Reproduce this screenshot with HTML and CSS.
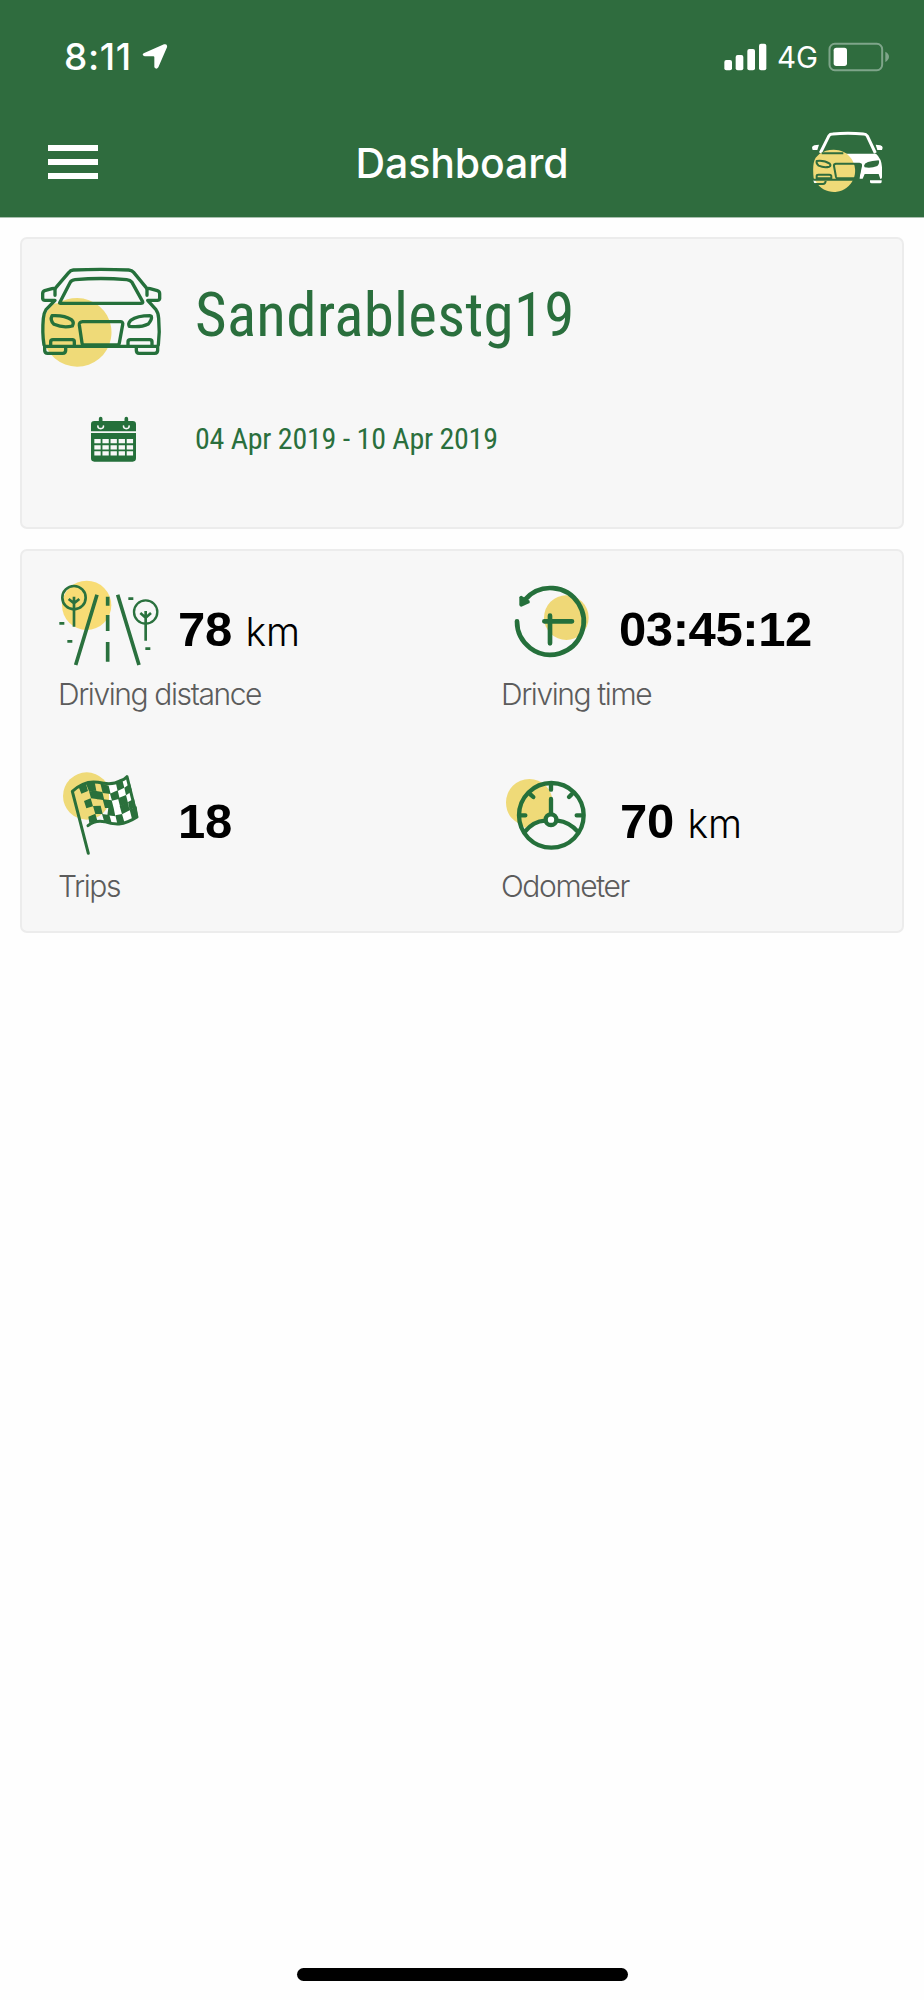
FILE: index.html
```html
<!DOCTYPE html>
<html lang="en">
<head>
<meta charset="utf-8">
<title>Dashboard</title>
<link rel="stylesheet" href="styles.css">
</head>
<body>
<div class="screen">
  <header class="header">
    <div class="status">
      <div class="clock">
        <span class="clock-time">8:11</span>
        <svg class="arrow" width="27" height="27" viewBox="426 129 81 81"><path d="M431 160L492 133Q503 130 501 142L475 202Q469 210 463 202V172Q463 169 460 169H434Q424 166 431 160Z" fill="#fff"/></svg>
      </div>
      <div class="signals">
        <svg width="45" height="29" viewBox="99 66 135 87" fill="#fff"><rect x="103" y="120" width="23" height="31" rx="6"/><rect x="137" y="105" width="23" height="46" rx="6"/><rect x="172" y="87" width="23" height="64" rx="6"/><rect x="207" y="71" width="22" height="80" rx="6"/></svg>
        <span class="network">4G</span>
        <svg width="62" height="30" viewBox="414 66 186 90"><rect x="418.500" y="71.500" width="158" height="79" rx="16" fill="none" stroke="#7fa58a" stroke-width="6"/><rect x="431" y="83" width="40" height="55" rx="8" fill="#fff"/><path d="M586 95Q597 101 597 110T586 126Z" fill="#7fa58a"/></svg>
      </div>
    </div>
    <nav class="nav">
      <div class="menu"><i></i><i></i><i></i></div>
      <h1 class="title">Dashboard</h1>
      <svg class="nav-car" width="75" height="63" viewBox="360 333 225 189">
        <path d="M391 399L417 347Q420 342 428 342Q473 338 521 342Q528 342 532 348L556 399" fill="none" stroke="#fff" stroke-width="9"/>
        <path d="M366 383Q366 378 373 376L387 374L382 390L368 390ZM578 383Q578 378 571 376L557 374L562 390L576 390Z" fill="#fff"/>
        <path d="M460 401H558Q575 416 576 442V472Q576 477 571 477L566 462H524L518 476H508L515 431H470Z" fill="#fff"/>
        <path d="M540 481H575V485Q575 490 570 490H545Q540 490 540 485Z" fill="#fff"/>
        <path d="M371 480H405V490H378Q371 490 371 485Z" fill="#fff"/>
        <path d="M388 402Q407 389 430 389A63.500 63.500 0 1 1 383 493L371 475Q366 430 377 413Z" fill="#efda78"/>
        <g fill="none" stroke="#2f6c3e" stroke-width="6" stroke-linejoin="round"><path d="M395 400H460M380 423Q403 420 419 431Q424 437 418 440Q402 444 386 437Q378 430 380 423ZM437 431H508Q514 432 513 438L505 475H443Q439 475 438 471L432 438Q431 432 437 431ZM380 475V468Q380 464 385 464H418Q424 464 424 469V475ZM371 479H510M376 492H399Q406 492 407 483"/></g>
        <path d="M522 437Q524 424 566 421Q570 429 562 438Q543 446 524 442Z" fill="#2f6c3e"/>
      </svg>
    </nav>
  </header>

  <main class="content">
    <section class="card profile">
      <div class="profile-row">
        <svg width="130" height="107" viewBox="78 120 390 321">
          <path d="M146 234Q170 219 202 219A103 103 0 1 1 112 373L100 350V280Q110 257 131 236Z" fill="#efda78"/>
          <g fill="none" stroke="#25703b" stroke-width="10" stroke-linejoin="round" stroke-linecap="round">
            <path d="M135 191L176 143Q181 136 190 135Q273 131 356 135Q366 136 371 142L411 191"/>
            <path d="M149 233L180 173Q184 165 195 164Q273 157 350 164Q361 165 366 172L398 230Q400 235 392 235H155Q148 235 149 233Z"/>
            <path d="M135 211V193Q133 189 126 191L104 197Q98 199 98 206V221Q99 226 105 226H135L108 254Q102 263 100 280Q96 322 102 360"/>
            <path d="M411 211V193Q413 189 420 191L442 197Q449 199 449 206V221Q448 226 442 226H413L438 254Q445 263 446 280Q450 322 445 360"/>
            <path d="M126 272Q164 270 184 284Q194 292 187 303Q160 310 132 298Q119 285 126 272ZM420 272Q382 272 362 286Q353 295 358 304Q393 308 415 297Q427 283 424 274Z"/>
            <path d="M218 290H332Q340 291 338 299L328 354Q327 360 320 360H223Q217 360 216 354L208 300Q207 291 218 290Z"/>
            <path d="M122 360V350Q122 344 129 344H187Q193 344 193 350V360M354 360V350Q354 344 361 344H419Q426 344 426 350V360M104 364H443V376Q443 385 434 385H387Q379 385 379 376V368M104 364V376Q104 385 113 385H158Q167 385 167 376V368"/>
          </g>
        </svg>
        <div class="profile-name">Sandrablestg19</div>
      </div>
      <div class="date-row">
        <svg width="47" height="47" viewBox="240 48 141 141">
          <path d="M253 63H368Q378 63 378 73V94H243V73Q243 63 253 63ZM243 99H378V175Q378 185 368 185H253Q243 185 243 175Z" fill="#25703b"/>
          <path d="M264 76Q262 86 272 86T280 76M341 76Q339 86 349 86T357 76" fill="none" stroke="#f7f7f7" stroke-width="5"/>
          <path d="M272 56V76M349 56V76" stroke="#25703b" stroke-width="11" stroke-linecap="round"/>
          <path d="M253 123.500H370M253 142H370M253 160H370" stroke="#f7f7f7" stroke-width="13" stroke-dasharray="19 5.300"/>
        </svg>
        <div class="date-range">04 Apr 2019 - 10 Apr 2019</div>
      </div>
    </section>

    <section class="card metrics">
      <div class="metric">
        <div class="metric-row">
          <svg width="102" height="88" viewBox="54 57 306 264">
            <circle cx="140" cy="136" r="74" fill="#f8dc75"/>
            <g fill="none" stroke="#2a713e" stroke-width="8">
              <circle cx="102" cy="113" r="35" stroke-width="8"/><path d="M102 110V200M86 117L102 130L118 117"/>
              <circle cx="317" cy="156" r="35" stroke-width="7"/><path d="M317 153V242M301 159L317 173L333 159" stroke-width="8"/>
              <path d="M171 104L107 315M233 104L297 315" stroke-width="11"/>
              <path d="M203 110V137M203 165V213M203 246V305" stroke-width="11"/>
              <path d="M58 190H73M82 244H97M265 116H280M316 266H331" stroke-width="8"/>
            </g>
          </svg>
          <div class="value">78 <span class="unit">km</span></div>
        </div>
        <div class="label">Driving distance</div>
      </div>
      <div class="metric">
        <div class="metric-row">
          <svg width="102" height="88" viewBox="63 57 306 264">
            <circle cx="259" cy="173" r="67" fill="#efd877"/>
            <g fill="none" stroke="#25703b" stroke-width="14" stroke-linecap="round">
              <path d="M111 184A100 100 0 1 0 136 118"/><path d="M193 184H276M210 167V250"/>
            </g>
            <path d="M124 107L149 122V129L124 140Q119 140 118 135V112Q119 107 124 107Z" fill="#25703b"/>
          </svg>
          <div class="value value-time">03:45:12</div>
        </div>
        <div class="label">Driving time</div>
      </div>
      <div class="metric">
        <div class="metric-row">
          <svg width="102" height="88" viewBox="54 63 306 264">
            <circle cx="140" cy="138" r="71" fill="#efda78"/>
            <path d="M207 104Q235 101 260 82L290 202Q250 228 217 220L207 190Z" fill="#fff"/>
            <g fill="#2a703b">
              <path d="M137 98L164 96L169 122L147 124ZM181 100L206 107L212 132L188 129ZM228 101L247 91L253 113L233 123Z"/>
              <path d="M116 111L137 98L144 123L124 131ZM164 122L187 126L193 151L169 147ZM210 131L233 121L239 146L216 152ZM253 113L270 101L276 124L258 136Z"/>
              <path d="M132 153L152 145L159 169L139 175ZM147 124L169 122L175 148L153 145ZM188 148L215 151L221 174L195 174ZM234 145L258 135L264 159L240 169Z"/>
              <path d="M159 168L182 167L188 192L166 192ZM205 174L221 174L226 199L202 196ZM239 168L263 157L269 181L246 193ZM264 156L282 146L287 171L269 181Z"/>
              <path d="M145 200L166 191L173 215L148 219ZM186 192L208 195L215 219L193 216ZM226 196L246 192L253 216L232 221ZM269 179L290 169L294 202L276 207Z"/>
            </g>
            <g fill="none" stroke="#2a703b" stroke-width="9" stroke-linecap="round" stroke-linejoin="round"><path d="M145 310L97 124Q134 90 174 97Q218 107 239 93Q254 89 261 80L291 201Q263 219 237 222Q214 223 194 215Q165 209 144 227"/></g>
          </svg>
          <div class="value">18</div>
        </div>
        <div class="label">Trips</div>
      </div>
      <div class="metric">
        <div class="metric-row">
          <svg width="102" height="88" viewBox="63 63 306 264">
            <path d="M136 234L113 218Q78 198 78 157A70 70 0 0 1 218 157V200L175 210Z" fill="#efda78"/>
            <g fill="none" stroke="#25703b" stroke-width="13" stroke-linecap="round">
              <circle cx="214" cy="196" r="97"/><path d="M135 245Q160 214 195 212M233 212Q268 216 293 245M213 147V192"/>
              <path d="M213 104V119M151 133L160 141M276 132L267 141M123 196H136M304 196H290"/>
            </g>
            <circle cx="213" cy="209" r="16" fill="#fff" stroke="#25703b" stroke-width="13"/>
          </svg>
          <div class="value value-odometer">70 <span class="unit">km</span></div>
        </div>
        <div class="label">Odometer</div>
      </div>
    </section>
  </main>
  <div class="home-indicator"></div>
</div>
</body>
</html>
```
FILE: styles.css
```css
* { box-sizing: border-box; }
body { margin: 0; background: #fefefe; font-family: Inter, "Liberation Sans", sans-serif; }
svg { display: block; flex: none; }
.screen { height: 2000px; display: flex; flex-direction: column; }
.header { height: 218px; flex: none; background: #2f6c3e; color: #fff; border-bottom: 1px solid #a9bfae; }
.status { height: 113px; padding: 0 34px 0 64px; display: flex; align-items: center; justify-content: space-between; }
.clock { display: flex; align-items: center; gap: 8px; }
.clock-time { font-size: 37px; font-weight: 550; line-height: 40px; width: 70px; letter-spacing: .6px; white-space: nowrap; }
.signals { display: flex; align-items: center; }
.network { width: 42px; margin: 1px 9px 0 9px; font-size: 29.5px; line-height: 32px; }
.nav { height: 98px; padding: 0 39px 0 48px; display: grid; grid-template-columns: 75px 1fr 75px; align-items: center; }
.menu { display: flex; flex-direction: column; gap: 8px; width: 50px; }
.menu i { height: 6px; background: #fff; }
.title { margin: 1px 0 0 -9px; font-size: 41px; font-weight: 550; line-height: 48px; letter-spacing: -.1px; text-align: center; }
.content { flex: 1; padding: 19px 20px 0; }
.card { border: 2px solid #ececec; border-radius: 7px; background: #f7f7f7; }
.profile { height: 292px; padding: 26px 14px 0; color: #2a6f3d; font-family: "Roboto Condensed", Roboto, sans-serif; font-stretch: 75%; }
.profile-row { display: flex; height: 107px; }
.profile-name { margin-left: 29px; font-size: 61px; line-height: 101px; letter-spacing: .25px; white-space: nowrap; }
.date-row { display: flex; align-items: center; margin-top: 44px; padding-left: 54px; }
.date-range { margin-left: 58px; font-size: 30px; line-height: 44px; letter-spacing: -.25px; padding-bottom: 2px; white-space: nowrap; }
.metrics { height: 384px; margin-top: 20px; padding: 28px 0 0 36px; display: grid; grid-template-columns: 443px 1fr; grid-auto-rows: 130px; row-gap: 62px; }
.metric-row { display: flex; height: 88px; }
.value { margin-left: 18px; font: bold 49px/100px "Liberation Sans", sans-serif; color: #000; letter-spacing: -.2px; white-space: nowrap; }
.value-time { margin-left: 16px; letter-spacing: -.4px; }
.value-odometer { margin-left: 17px; }
.unit { font: 300 39px/40px Inter, sans-serif; letter-spacing: -.2px; }
.label { margin-top: 12px; font-size: 30px; font-weight: 300; line-height: 30px; letter-spacing: -1.4px; color: #5c5c5c; }
.home-indicator { align-self: center; width: 331px; height: 13px; margin-bottom: 19px; border-radius: 7px; background: #000; }
```
